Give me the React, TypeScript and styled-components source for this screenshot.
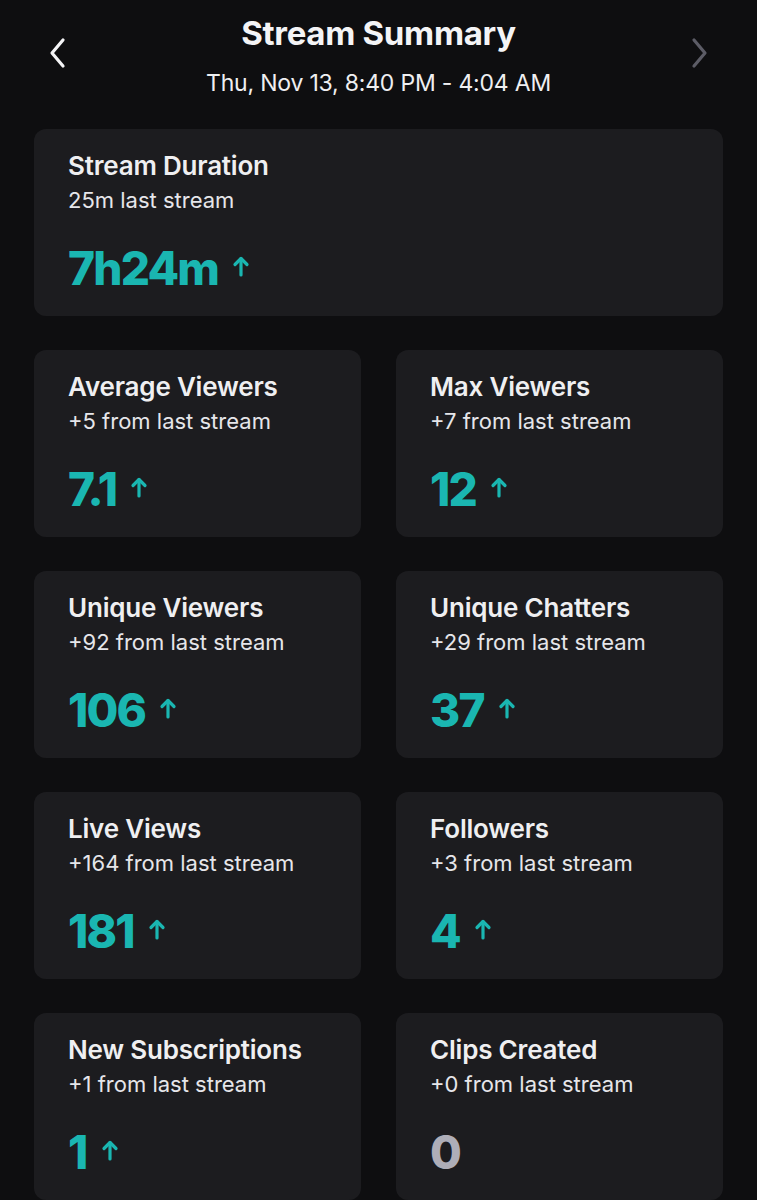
import React from "react";
import styled, { createGlobalStyle } from "styled-components";

const Global = createGlobalStyle`
  html, body { margin: 0; padding: 0; background: #0e0e10; }
  body { font-family: Inter, "Noto Sans", sans-serif; color: #efeff1; }
`;

const Page = styled.div`
  width: 757px;
  min-height: 1200px;
  background: #0e0e10;
  box-sizing: border-box;
  padding: 0 34px;
`;

const Header = styled.header`
  display: grid;
  grid-template-columns: 48px 1fr 48px;
  align-items: center;
  height: 129px;
`;

const HeaderCenter = styled.div`
  display: flex;
  flex-direction: column;
  align-items: center;
  padding-bottom: 20px;
`;

const Title = styled.h1`
  margin: 0;
  font-size: 33px;
  font-weight: 700;
  line-height: 40px;
  color: #f4f4f6;
  letter-spacing: -0.3px;
`;

const DateLine = styled.div`
  margin-top: 16px;
  font-size: 23px;
  font-weight: 400;
  line-height: 28px;
  color: #efeff1;
  letter-spacing: -0.2px;
`;

const NavButton = styled.button<{ $dim?: boolean }>`
  background: none;
  border: none;
  padding: 0;
  display: flex;
  align-items: center;
  justify-content: center;
  color: ${(p) => (p.$dim ? "#5c5c66" : "#f4f4f6")};
  height: 48px;
  margin-bottom: 24px;
`;

const Grid = styled.div`
  display: grid;
  grid-template-columns: 1fr 1fr;
  column-gap: 35px;
  row-gap: 34px;
`;

const Card = styled.div<{ $wide?: boolean }>`
  grid-column: ${(p) => (p.$wide ? "1 / -1" : "auto")};
  background: #1c1c1f;
  border-radius: 12px;
  height: 187px;
  box-sizing: border-box;
  padding: 21px 34px 0;
  display: flex;
  flex-direction: column;
`;

const CardTitle = styled.div`
  font-size: 26px;
  font-weight: 600;
  line-height: 32px;
  color: #efeff1;
  letter-spacing: -0.2px;
`;

const CardSub = styled.div`
  font-size: 22px;
  font-weight: 400;
  line-height: 28px;
  margin-top: 4px;
  color: #e6e6ea;
`;

const ValueRow = styled.div`
  display: flex;
  align-items: center;
  gap: 14px;
  margin-top: 28px;
`;

const Value = styled.div<{ $muted?: boolean }>`
  font-size: 46px;
  font-weight: 800;
  line-height: 52px;
  letter-spacing: -1.8px;
  color: ${(p) => (p.$muted ? "#aeaeb8" : "#1ab6b1")};
`;

const ArrowIcon = styled.svg`
  margin-top: -4px;
  flex: none;
`;

const Arrow = () => (
  <ArrowIcon width="18" height="22" viewBox="0 0 18 22" fill="none" stroke="#1ab6b1" strokeWidth="3.2" strokeLinecap="round" strokeLinejoin="round">
    <path d="M9 20V3.5" />
    <path d="M3 9.5L9 3.5l6 6" />
  </ArrowIcon>
);

const Chevron = ({ dir }: { dir: "left" | "right" }) => (
  <svg width="20" height="32" viewBox="0 0 20 32" fill="none" stroke="currentColor" strokeWidth="3.2" strokeLinecap="round" strokeLinejoin="round">
    {dir === "left" ? <path d="M15 3L4 16l11 13" /> : <path d="M5 3l11 13L5 29" />}
  </svg>
);

type Stat = { title: string; sub: string; value: string; up: boolean; wide?: boolean };

const stats: Stat[] = [
  { title: "Stream Duration", sub: "25m last stream", value: "7h24m", up: true, wide: true },
  { title: "Average Viewers", sub: "+5 from last stream", value: "7.1", up: true },
  { title: "Max Viewers", sub: "+7 from last stream", value: "12", up: true },
  { title: "Unique Viewers", sub: "+92 from last stream", value: "106", up: true },
  { title: "Unique Chatters", sub: "+29 from last stream", value: "37", up: true },
  { title: "Live Views", sub: "+164 from last stream", value: "181", up: true },
  { title: "Followers", sub: "+3 from last stream", value: "4", up: true },
  { title: "New Subscriptions", sub: "+1 from last stream", value: "1", up: true },
  { title: "Clips Created", sub: "+0 from last stream", value: "0", up: false },
];

export default function App() {
  return (
    <Page>
      <Global />
      <Header>
        <NavButton aria-label="Previous">
          <Chevron dir="left" />
        </NavButton>
        <HeaderCenter>
          <Title>Stream Summary</Title>
          <DateLine>Thu, Nov 13, 8:40 PM - 4:04 AM</DateLine>
        </HeaderCenter>
        <NavButton $dim aria-label="Next">
          <Chevron dir="right" />
        </NavButton>
      </Header>
      <Grid>
        {stats.map((s) => (
          <Card key={s.title} $wide={s.wide}>
            <CardTitle>{s.title}</CardTitle>
            <CardSub>{s.sub}</CardSub>
            <ValueRow>
              <Value $muted={!s.up}>{s.value}</Value>
              {s.up && <Arrow />}
            </ValueRow>
          </Card>
        ))}
      </Grid>
    </Page>
  );
}
